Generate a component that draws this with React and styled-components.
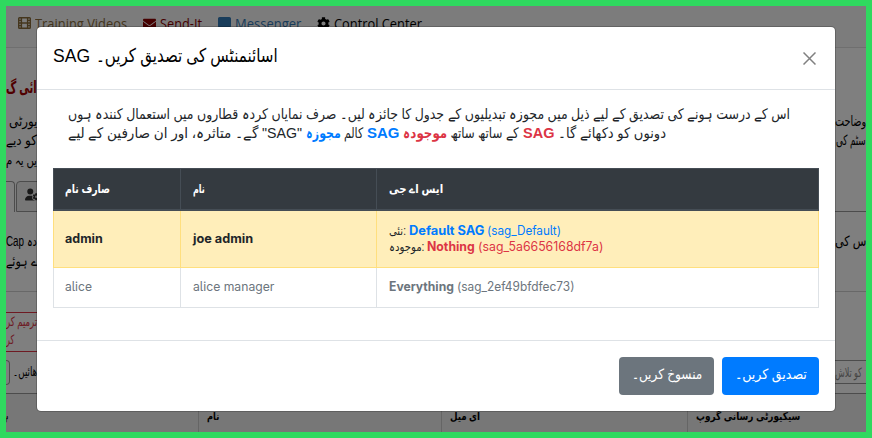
import React, { useLayoutEffect, useRef, useState } from "react";
import styled, { createGlobalStyle } from "styled-components";
import { FaEnvelope, FaCog } from "react-icons/fa";
import { FaUserGear, FaMessage } from "react-icons/fa6";

const arabic = '"Liberation Sans", "DejaVu Sans", sans-serif';
const latin = 'Inter, "DejaVu Sans", sans-serif';

const Global = createGlobalStyle`
  * { box-sizing: border-box; }
  body { margin: 0; overflow: hidden; }
`;

const Frame = styled.div`
  position: relative;
  width: 872px;
  height: 438px;
  border: 6px solid #2fd95f;
  overflow: hidden;
  background: #fff;
  font-family: ${arabic};
  color: #000;
`;

/* Text scaled horizontally to occupy a given width */
const FitBox = styled.span`
  display: inline-block;
  flex: none;
  width: ${(p) => p.$w}px;
  white-space: nowrap;
  vertical-align: baseline;
`;
const FitInner = styled.span`
  display: inline-block;
  white-space: pre;
  transform-origin: 0 50%;
`;
function Fit({ w, children }) {
  const ref = useRef(null);
  const [scale, setScale] = useState(1);
  useLayoutEffect(() => {
    setScale(w / ref.current.offsetWidth);
  }, [w]);
  return (
    <FitBox $w={w}>
      <FitInner ref={ref} style={{ transform: `scaleX(${scale})` }}>{children}</FitInner>
    </FitBox>
  );
}

/* ---------- page behind the dialog ---------- */
const Page = styled.div`
  display: flex;
  flex-direction: column;
  height: 426px;
`;
const Nav = styled.nav`
  display: flex;
  height: 42px;
  padding: 7px 0 0 12px;
  background: #f8f8f8;
  border-bottom: 1px solid #dedede;
  font: 14px/20px "Open Sans", sans-serif;
`;
const NavItem = styled.a`
  display: flex;
  align-items: center;
  height: 20px;
  width: ${(p) => p.$w}px;
  color: ${(p) => p.$color};
  svg { flex: none; margin-right: 4px; }
  span { position: relative; top: 0.5px; }
`;
const Strip = styled.div`
  display: flex;
  flex: none;
  justify-content: space-between;
  height: ${(p) => p.$h}px;
  line-height: ${(p) => p.$lh || p.$h}px;
  font-size: ${(p) => p.$size || 14}px;
  font-weight: ${(p) => p.$weight || 400};
  color: ${(p) => p.$color || "#000"};
  border-bottom: ${(p) => (p.$line ? `1px solid ${p.$line}` : "0")};
`;
const Edge = styled.div`
  display: flex;
  width: 31px;
  white-space: nowrap;
  padding-left: ${(p) => p.$pad || 0}px;
`;
const Copy = styled.div`
  padding-top: 19px;
`;
const Tabs = styled.div`
  display: flex;
  height: 31px;
  flex: none;
`;
const ActiveTab = styled.div`
  width: 9px;
  border: 1px solid #999;
  border-width: 1px 1px 0 0;
  border-radius: 0 4px 0 0;
`;
const Tab = styled.div`
  width: 60px;
  margin-left: 1px;
  padding: 5px 0 0 8px;
  border: 1px solid #999;
  border-radius: 4px 4px 0 0;
  background: #eee;
  color: #333;
`;
const TabRule = styled.div`
  flex: 1;
  border-bottom: 1px solid #999;
`;
const RedBox = styled.div`
  width: 120px;
  height: 40px;
  margin-top: 20px;
  flex: none;
  border: 1px solid #dc3545;
  border-width: 1px 0;
  color: #dc3545;
  font-size: 13px;
  line-height: 18px;
`;
const Controls = styled.div`
  display: flex;
  align-items: flex-start;
  flex: none;
  height: 42px;
  padding-top: 8px;
  border-bottom: 1px solid #999;
  justify-content: space-between;
  line-height: 24px;
  font-size: 13px;
`;
const SelectEnd = styled.div`
  width: 4px;
  height: 25px;
  border: 1px solid #999;
  border-left: 0;
  border-radius: 0 4px 4px 0;
`;
const Group = styled.div`
  display: flex;
  gap: 3px;
`;
const Search = styled.div`
  width: 31px;
  height: 24px;
  border: 1px solid #999;
  border-width: 1px 0;
  color: #888;
`;
const Grid = styled.div`
  display: grid;
  grid-template-columns: 193px 243px 246px 1fr;
  flex: 1;
  background: #eee;
  font-weight: 700;
  font-size: 11px;
  line-height: 15px;
`;
const GridCell = styled.div`
  padding: 15px 0 0 8px;
  border-right: 1px solid #cacaca;
  &:first-child { padding-left: 0; }
  &:last-child { border: 0; }
`;
const Shade = styled.div`
  position: absolute;
  inset: 0;
  background: rgba(0, 0, 0, 0.5);
`;

/* ---------- dialog ---------- */
const Dialog = styled.section`
  position: absolute;
  left: 30px;
  top: 20px;
  width: 800px;
  height: 386px;
  display: flex;
  flex-direction: column;
  background: #fff;
  background-clip: padding-box;
  border: 1px solid rgba(0, 0, 0, 0.2);
  border-radius: 5px;
`;
const Header = styled.header`
  display: flex;
  justify-content: space-between;
  height: 63px;
  padding: 15px 19px 0 16px;
  border-bottom: 1px solid #dee2e6;
  font-size: 19px;
  line-height: 28px;
`;
const Title = styled.div`
  display: flex;
  gap: 6px;
`;
const Close = styled.svg`
  width: 13px;
  height: 13px;
  margin-top: 10px;
  stroke: #808080;
  stroke-width: 1.5;
`;
const Body = styled.div`
  flex: 1;
  padding: 15px 15px 0 16px;
`;
const Intro = styled.p`
  margin: 0 0 25px 14.5px;
  font-size: 14.5px;
  line-height: 19px;
  color: #212529;
  white-space: nowrap;
`;
const IntroLine = styled.span`
  display: flex;
  gap: 4px;
  height: 19px;
`;
const Strong = styled.b`
  color: ${(p) => p.$color || "inherit"};
`;
const Tint = styled.span`
  color: ${(p) => p.$color};
`;
const Table = styled.div`
  display: grid;
  grid-template-columns: 128px 196px 442px;
  grid-template-rows: 43px 57px 40px;
  font: 12.5px/16px ${latin};
  font-feature-settings: "cv05";
`;
const tones = {
  head: { bg: "#343a40", line: "#454d55", color: "#fff", bottom: 2 },
  marked: { bg: "#ffeeba", line: "#ffdf7e", color: "#212529", bottom: 1 },
  plain: { bg: "#fff", line: "#dee2e6", color: "#6c757d", bottom: 1 },
};
const Cell = styled.div`
  display: flex;
  flex-direction: column;
  justify-content: center;
  padding-left: ${(p) => (p.$first ? 11 : 12)}px;
  padding-bottom: ${(p) => (p.$tone === "marked" ? 0 : 1)}px;
  background: ${(p) => tones[p.$tone].bg};
  color: ${(p) => tones[p.$tone].color};
  border: 0 solid ${(p) => tones[p.$tone].line};
  border-right-width: 1px;
  border-bottom-width: ${(p) => tones[p.$tone].bottom}px;
  border-left-width: ${(p) => (p.$first ? 1 : 0)}px;
  border-top-width: ${(p) => (p.$tone === "head" ? 1 : 0)}px;
`;
const HeadText = styled.b`
  font: 700 12px/16px ${arabic};
`;
const CellLine = styled.div`
  display: flex;
  height: 16px;
`;
const Label = styled.span`
  font: 12px/16px ${arabic};
`;
const Footer = styled.footer`
  display: flex;
  justify-content: flex-end;
  gap: 8px;
  height: 71px;
  padding: 16px 16px 0 0;
  border-top: 1px solid #dee2e6;
`;
const Button = styled.button`
  width: ${(p) => p.$w}px;
  height: 38px;
  padding: 0 0 4px;
  border: 0;
  border-radius: 4px;
  background: ${(p) => p.$bg};
  color: #fff;
  font: 14px/20px ${arabic};
`;

const blue = "#007bff";
const red = "#dc3545";

function FilmIcon() {
  return (
    <svg width="13" height="12" viewBox="0 0 13 12" fill="none" stroke="currentColor" strokeWidth="1.4">
      <rect x=".7" y=".7" width="11.6" height="10.6" rx=".8" />
      <path d="M3.4 1v10M9.6 1v10M3.4 6h6.2M.7 3.4h2.7M.7 6h2.7M.7 8.6h2.7M9.6 3.4h2.7M9.6 6h2.7M9.6 8.6h2.7" />
    </svg>
  );
}

export default function App() {
  return (
    <Frame>
      <Global />
      <Page>
        <Nav>
          <NavItem $w={125} $color="#8a6d3b"><FilmIcon /><Fit w={92}>Training Videos</Fit></NavItem>
          <NavItem $w={75} $color="#8b0000"><FaEnvelope size={13} /><Fit w={42}>Send-It</Fit></NavItem>
          <NavItem $w={99} $color="#337ab7"><FaMessage size={13} /><Fit w={66}>Messenger</Fit></NavItem>
          <NavItem $w={110} $color="#000"><FaCog size={13} /><Fit w={88}>Control Center</Fit></NavItem>
        </Nav>
        <Strip $h={63} $lh={80} $size={17} $weight={700} $color="#a00000">
          <Edge><Fit w={31}>ائی گ</Fit></Edge>
        </Strip>
        <Strip $h={20}><Edge $pad={3}><Fit w={28}>یورٹی</Fit></Edge><Edge><Fit w={31}>وضاحت</Fit></Edge></Strip>
        <Strip $h={20} $lh={18}><Edge><Fit w={31}>کو دیے</Fit></Edge><Edge $pad={1}><Fit w={30}>سٹم کی</Fit></Edge></Strip>
        <Strip $h={30} $lh={18}><Edge><Fit w={31}>یں یہ م</Fit></Edge></Strip>
        <Tabs>
          <ActiveTab />
          <Tab><FaUserGear size={15} /></Tab>
          <TabRule />
        </Tabs>
        <Strip $h={80} $lh={20} $line="#d0d0d0">
          <Edge>
            <Copy>
              <div><Fit w={31}>Cap دہ</Fit></div>
              <div><Fit w={31}>ے ہوئے</Fit></div>
            </Copy>
          </Edge>
          <Edge><Copy><Fit w={31}>س کی</Fit></Copy></Edge>
        </Strip>
        <RedBox>
          <div><Fit w={31}>ترمیم کر</Fit></div>
          <div><Fit w={8}>کر</Fit></div>
        </RedBox>
        <Controls>
          <Group><SelectEnd /><Fit w={24}>ھائیں۔</Fit></Group>
          <Search><Fit w={27}>کو تلاش</Fit></Search>
        </Controls>
        <Grid>
          <GridCell><Fit w={2}>م</Fit></GridCell>
          <GridCell><Fit w={12}>نام</Fit></GridCell>
          <GridCell><Fit w={30}>ای میل</Fit></GridCell>
          <GridCell><Fit w={104}>سیکیورٹی رسانی گروپ</Fit></GridCell>
        </Grid>
      </Page>
      <Shade />
      <Dialog>
        <Header>
          <Title>
            <Fit w={37}>SAG</Fit>
            <Fit w={182}>اسائنمنٹس کی تصدیق کریں۔</Fit>
          </Title>
          <Close viewBox="0 0 13 13"><path d="M.5.5l12 12M12.5.5l-12 12" /></Close>
        </Header>
        <Body>
          <Intro>
            <IntroLine><Fit w={722}>اس کے درست ہونے کی تصدیق کے لیے ذیل میں مجوزہ تبدیلیوں کے جدول کا جائزہ لیں۔ صرف نمایاں کردہ قطاروں میں استعمال کنندہ ہوں</Fit></IntroLine>
            <IntroLine>
              <Fit w={190.5}>گے۔ متاثرہ، اور ان صارفین کے لیے</Fit>
              <Fit w={40}>"SAG"</Fit>
              <Fit w={57}>کالم <Strong $color={blue}>مجوزہ</Strong></Fit>
              <Strong $color={blue}><Fit w={32}>SAG</Fit></Strong>
              <Fit w={116}>کے ساتھ ساتھ <Strong $color={red}>موجودہ</Strong></Fit>
              <Strong $color={red}><Fit w={31}>SAG</Fit></Strong>
              <Fit w={108}>دونوں کو دکھائے گا۔</Fit>
            </IntroLine>
          </Intro>
          <Table>
            <Cell $tone="head" $first><HeadText><Fit w={45}>صارف نام</Fit></HeadText></Cell>
            <Cell $tone="head"><HeadText><Fit w={12}>نام</Fit></HeadText></Cell>
            <Cell $tone="head"><HeadText><Fit w={54}>ایس اے جی</Fit></HeadText></Cell>
            <Cell $tone="marked" $first><Strong><Fit w={38}>admin</Fit></Strong></Cell>
            <Cell $tone="marked"><Strong><Fit w={60}>joe admin</Fit></Strong></Cell>
            <Cell $tone="marked">
              <CellLine><Label><Fit w={20}>نئی: </Fit></Label><Strong $color={blue}><Fit w={78}>Default SAG </Fit></Strong><Tint $color={blue}><Fit w={74}>(sag_Default)</Fit></Tint></CellLine>
              <CellLine><Label><Fit w={38}>موجودہ: </Fit></Label><Strong $color={red}><Fit w={51}>Nothing </Fit></Strong><Tint $color={red}><Fit w={125}>(sag_5a6656168df7a)</Fit></Tint></CellLine>
            </Cell>
            <Cell $tone="plain" $first><span><Fit w={27}>alice</Fit></span></Cell>
            <Cell $tone="plain"><span><Fit w={81}>alice manager</Fit></span></Cell>
            <Cell $tone="plain">
              <CellLine><Strong><Fit w={68}>Everything </Fit></Strong><Fit w={118}>(sag_2ef49bfdfec73)</Fit></CellLine>
            </Cell>
          </Table>
        </Body>
        <Footer>
          <Button $w={95} $bg="#6c757d"><Fit w={70}>منسوخ کریں۔</Fit></Button>
          <Button $w={97} $bg={blue}><Fit w={72}>تصدیق کریں۔</Fit></Button>
        </Footer>
      </Dialog>
    </Frame>
  );
}
